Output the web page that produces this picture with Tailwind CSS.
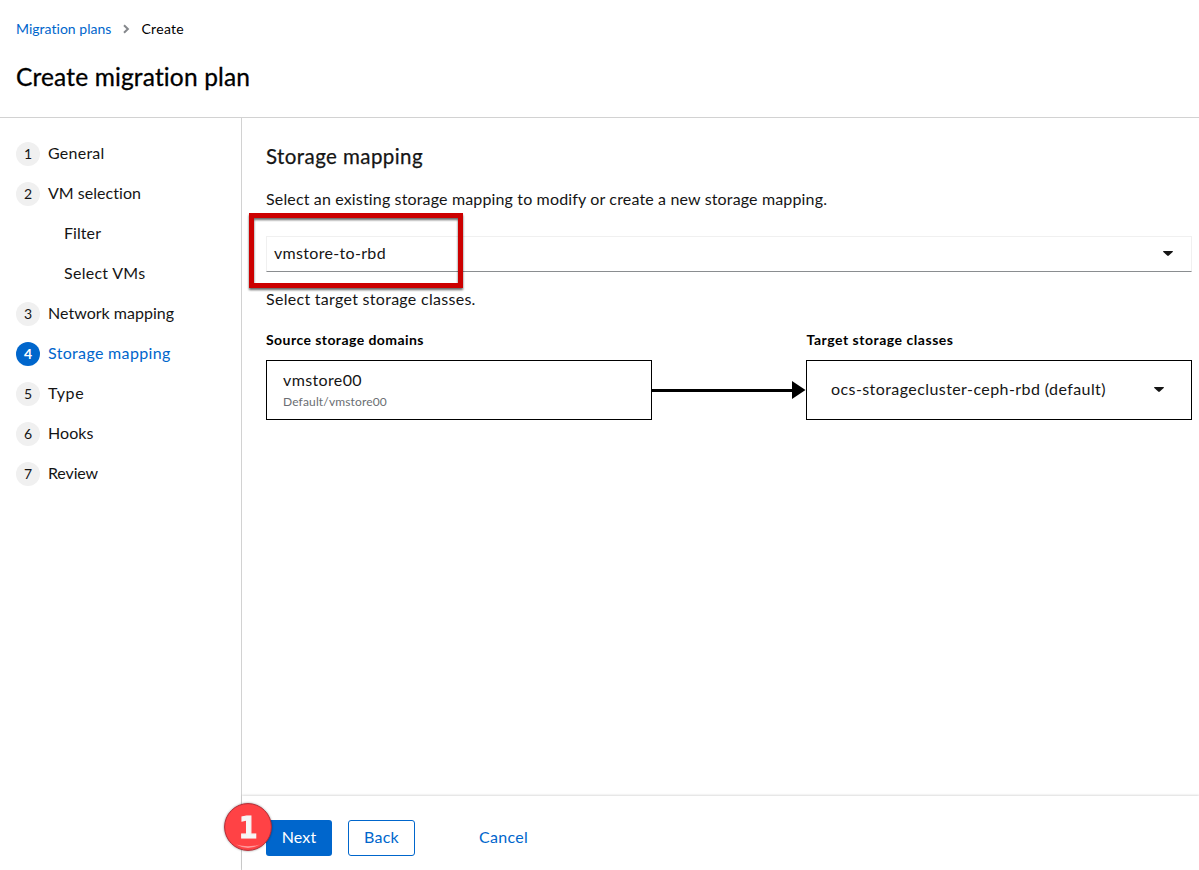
<!DOCTYPE html>
<html lang="en">
<head>
<meta charset="utf-8">
<title>Create migration plan</title>
<script src="https://cdn.jsdelivr.net/npm/@tailwindcss/browser@4"></script>
</head>
<body class="relative flex h-[870px] w-[1199px] flex-col overflow-hidden bg-white font-['Lato',sans-serif] text-base text-[#151515] [font-variant-ligatures:none]">
  <header class="h-[118px] shrink-0 border-b border-[#d2d2d2] px-4 pt-[18px] text-black">
    <nav class="flex h-[21px] items-center text-sm leading-[21px]">
      <a class="w-[95px] whitespace-nowrap tracking-[0.02px] text-[#0066cc]">Migration plans</a>
      <svg class="ml-3 mr-[11.5px] h-2.5 w-[7px]" viewBox="0 0 7 10" fill="none" stroke="#85888c" stroke-width="2"><path d="M1 1.2 4.9 5 1 8.8"/></svg>
      <span class="tracking-[0.29px]">Create</span>
    </nav>
    <h1 class="mt-[22px] text-[24.5px] leading-[31px] tracking-[0.15px] [-webkit-text-stroke:0.3px]">Create migration plan</h1>
  </header>

  <div class="flex min-h-0 flex-1">
    <aside class="w-[242px] shrink-0 border-r border-[#d2d2d2] px-4 pt-6">
      <ol class="flex flex-col gap-4">
        <li class="flex h-6 items-center gap-2"><span class="flex size-6 items-center justify-center rounded-full bg-[#f0f0f0] pb-px text-sm leading-6">1</span><span class="pb-0.5 leading-[22px] tracking-[0.24px]">General</span></li>
        <li class="flex h-6 items-center gap-2"><span class="flex size-6 items-center justify-center rounded-full bg-[#f0f0f0] pb-px text-sm leading-6">2</span><span class="pb-0.5 leading-[22px] tracking-[0.03px]">VM selection</span></li>
        <li class="flex h-6 items-center pl-12"><span class="pb-0.5 leading-[22px] tracking-[0.07px]">Filter</span></li>
        <li class="flex h-6 items-center pl-12"><span class="pb-0.5 leading-[22px] tracking-[0.28px]">Select VMs</span></li>
        <li class="flex h-6 items-center gap-2"><span class="flex size-6 items-center justify-center rounded-full bg-[#f0f0f0] pb-px text-sm leading-6">3</span><span class="pb-0.5 leading-[22px] tracking-[0.02px]">Network mapping</span></li>
        <li class="flex h-6 items-center gap-2 text-[#0066cc]"><span class="flex size-6 items-center justify-center rounded-full bg-[#0066cc] pb-px text-sm leading-6 font-bold text-white">4</span><span class="pb-0.5 leading-[22px] tracking-[0.33px]">Storage mapping</span></li>
        <li class="flex h-6 items-center gap-2"><span class="flex size-6 items-center justify-center rounded-full bg-[#f0f0f0] pb-px text-sm leading-6">5</span><span class="pb-0.5 leading-[22px] tracking-[0.65px]">Type</span></li>
        <li class="flex h-6 items-center gap-2"><span class="flex size-6 items-center justify-center rounded-full bg-[#f0f0f0] pb-px text-sm leading-6">6</span><span class="pb-0.5 leading-[22px] tracking-[0.07px]">Hooks</span></li>
        <li class="flex h-6 items-center gap-2"><span class="flex size-6 items-center justify-center rounded-full bg-[#f0f0f0] pb-px text-sm leading-6">7</span><span class="pb-0.5 leading-[22px] tracking-[-0.13px]">Review</span></li>
      </ol>
    </aside>

    <div class="flex min-w-0 flex-1 flex-col">
      <main class="flex-1 pl-6 pr-[7px] pt-[23px]">
        <h2 class="text-[20.5px] leading-[30px] tracking-[0.42px] [-webkit-text-stroke:0.25px]">Storage mapping</h2>
        <p class="mt-4 leading-6 tracking-[0.15px]">Select an existing storage mapping to modify or create a new storage mapping.</p>

        <div class="relative mt-[25px]">
          <div class="flex h-9 items-center justify-between border border-[#f0f0f0] border-b-[#8a8d90] pb-0.5 pl-[7px] pr-[18px]">
            <span class="pb-px leading-6 tracking-[0.32px]">vmstore-to-rbd</span>
            <svg class="h-[5px] w-2.5" viewBox="0 0 10 5" fill="#151515"><path d="M.6 0h8.8q.9.2.3.9L5.8 4.6q-.8.7-1.6 0L.3.9Q-.3.2.6 0z"/></svg>
          </div>
          <div class="absolute -left-[17px] -top-[23px] h-[75px] w-[214px] border-[5px] border-[#cc0000] [filter:drop-shadow(0_2px_1px_rgba(0,0,0,0.6))]"></div>
        </div>

        <p class="mt-[15px] leading-6 tracking-[0.29px]">Select target storage classes.</p>

        <div class="mt-[18px] grid grid-cols-[386px_154px_386px] text-black">
          <h3 class="h-[31px] text-sm leading-[21px] font-bold tracking-[0.44px]">Source storage domains</h3>
          <span></span>
          <h3 class="h-[31px] pl-[0.5px] text-sm leading-[21px] font-bold tracking-[0.53px]">Target storage classes</h3>
          <div class="h-[60px] border border-black pl-4 pt-[7px]">
            <div class="leading-6 tracking-[0.37px] text-[#151515]">vmstore00</div>
            <div class="mt-px text-xs leading-[18px] tracking-[0.15px] text-[#6a6e73]">Default/vmstore00</div>
          </div>
          <svg class="h-[60px] w-[154px]" viewBox="0 0 154 60"><path d="M0 29h141v3H0z"/><path d="m140 21 13.5 9L140 39z"/></svg>
          <div class="flex h-[60px] items-center justify-between border border-black pb-0.5 pl-6 pr-[27px] text-[#151515]">
            <span class="pb-px leading-6 tracking-[0.42px]">ocs-storagecluster-ceph-rbd (default)</span>
            <svg class="h-[5px] w-2.5" viewBox="0 0 10 5" fill="#151515"><path d="M.6 0h8.8q.9.2.3.9L5.8 4.6q-.8.7-1.6 0L.3.9Q-.3.2.6 0z"/></svg>
          </div>
        </div>
      </main>

      <footer class="relative flex h-[74px] shrink-0 items-start gap-4 pl-6 pt-6 text-[#0066cc] shadow-[0_-1px_2px_rgba(3,3,3,0.14)]">
        <button class="h-9 w-[66px] rounded-[3px] bg-[#0066cc] pb-[3px] leading-[33px] tracking-[0.12px] text-white">Next</button>
        <button class="h-9 w-[67px] rounded-[3px] border border-[#0066cc] pb-[3px] leading-[31px] tracking-[0.27px]">Back</button>
        <button class="ml-8 h-9 w-[81px] pb-[3px] leading-[33px] tracking-[0.3px]">Cancel</button>
        <svg class="absolute -left-[19px] top-[6px] h-[52px] w-[52px] [filter:drop-shadow(0_0_1px_rgba(0,0,0,0.4))]" viewBox="0 0 52 52">
          <circle cx="25" cy="25" r="23.4" fill="#ff4245" stroke="#b52b35" stroke-width="1"/>
          <path d="M13 42.5q12 6.8 24 0-12 3.6-24 0z" fill="#ff9a9c"/>
          <text x="25" y="35.5" text-anchor="middle" font-family="DejaVu Sans Mono" font-weight="700" font-size="30" fill="#f6f6f6" stroke="#f6f6f6" stroke-width="1.2">1</text>
        </svg>
      </footer>
    </div>
  </div>
</body>
</html>
